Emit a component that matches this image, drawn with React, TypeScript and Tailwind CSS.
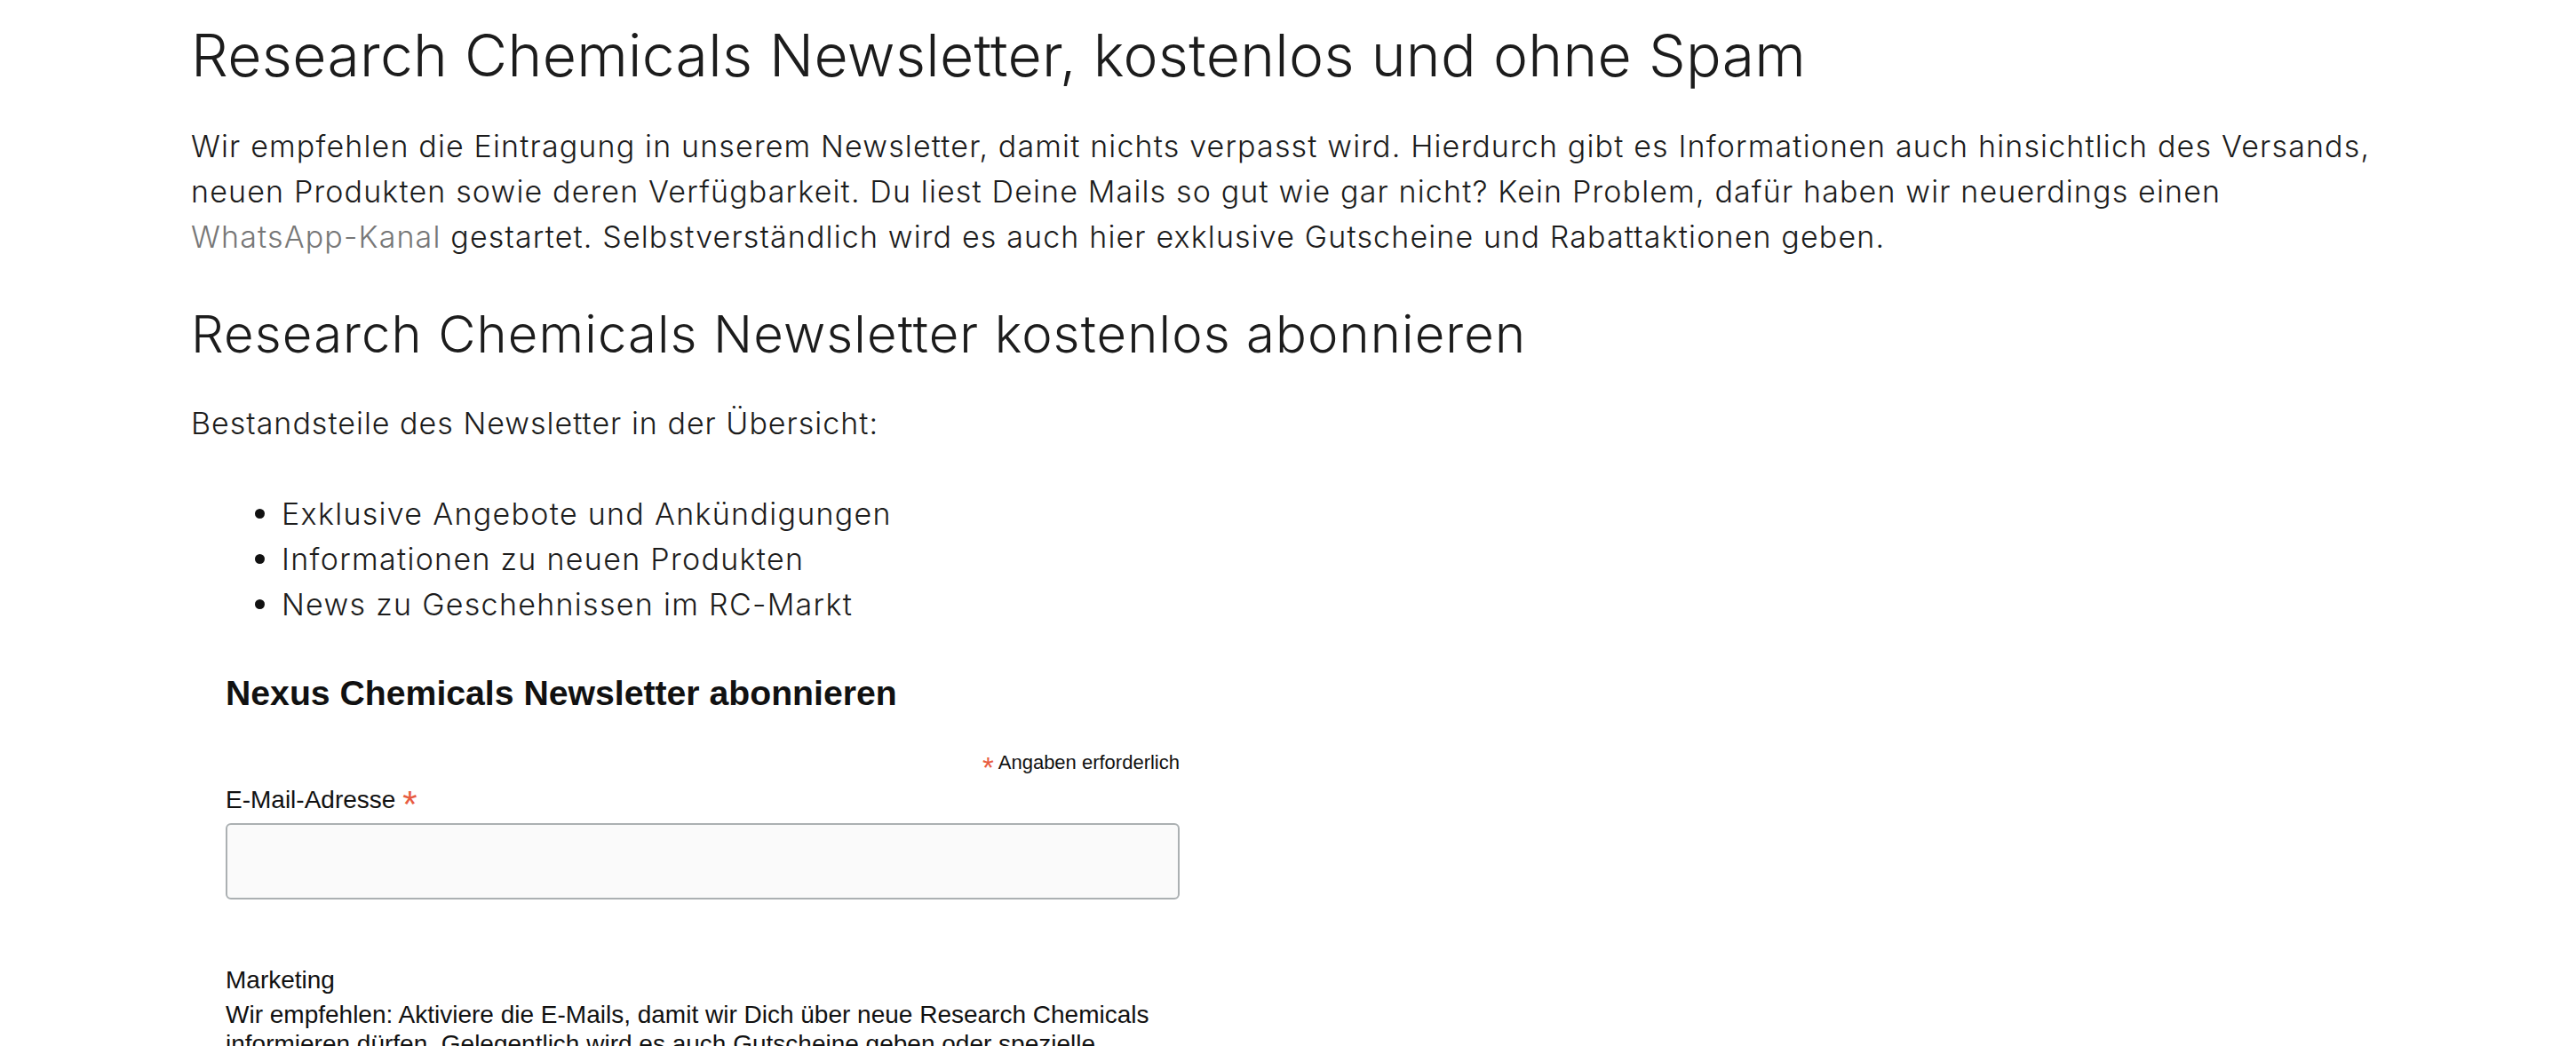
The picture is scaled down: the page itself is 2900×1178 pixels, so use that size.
import React from "react";

const bullets = [
  "Exklusive Angebote und Ankündigungen",
  "Informationen zu neuen Produkten",
  "News zu Geschehnissen im RC-Markt",
];

// Mailchimp-Formular
const SignupForm = () => {
  return (
    <form
      onSubmit={(e) => e.preventDefault()}
      className="ml-[39px] mt-[52px] w-[1074px] font-['Liberation_Sans',Helvetica,Arial,sans-serif] font-normal text-[#111]"
    >
      <h2 className="text-[39.2px] font-bold leading-[45px]">
        Nexus Chemicals Newsletter abonnieren
      </h2>
      <div className="mt-[43px] text-right text-[22px] leading-[26px]">
        <span className="relative top-[10px] text-[33px] leading-[0] text-[#e85c41]">
          *
        </span>{" "}
        Angaben erforderlich
      </div>
      <label
        htmlFor="mce-EMAIL"
        className="mt-[13px] block text-[28px] leading-[32px]"
      >
        E-Mail-Adresse{" "}
        <span className="relative top-[10px] text-[42px] leading-[0] text-[#e85c41]">
          *
        </span>
      </label>
      <input
        id="mce-EMAIL"
        type="email"
        className="mt-[10px] block h-[86px] w-full rounded-[6px] border-2 border-[#abb0b2] bg-[#fafafa] px-4 text-[28px] outline-none"
      />
      <div className="mt-[75px] text-[28px] leading-[32px]">Marketing</div>
      <p className="mt-[6px] text-[28px] leading-[33px]">
        Wir empfehlen: Aktiviere die E-Mails, damit wir Dich über neue Research
        Chemicals informieren dürfen. Gelegentlich wird es auch Gutscheine geben
        oder spezielle Angebote nur für Abonnenten.
      </p>
    </form>
  );
};

const App: React.FC = () => {
  return (
    <div className="min-h-screen bg-white">
      <main className="ml-[215px] w-[2560px] pt-[23px] font-['Inter','Open_Sans',sans-serif] font-light text-[#1c1c1c]">
        <h1 className="text-[66px] leading-[79px] tracking-[0.3px]">
          Research Chemicals Newsletter, kostenlos und ohne Spam
        </h1>
        <p className="mt-[37px] text-[34px] leading-[51px] tracking-[1.15px]">
          Wir empfehlen die Eintragung in unserem Newsletter, damit nichts
          verpasst wird. Hierdurch gibt es Informationen auch hinsichtlich des
          Versands,
          <br />
          neuen Produkten sowie deren Verfügbarkeit. Du liest Deine Mails so gut
          wie gar nicht? Kein Problem, dafür haben wir neuerdings einen
          <br />
          <a href="#" className="text-[#777]">
            WhatsApp-Kanal
          </a>{" "}
          gestartet. Selbstverständlich wird es auch hier exklusive Gutscheine
          und Rabattaktionen geben.
        </p>
        <h2 className="mt-[50px] text-[58px] leading-[69px] tracking-[1.1px]">
          Research Chemicals Newsletter kostenlos abonnieren
        </h2>
        <p className="mt-[40px] text-[34px] leading-[51px] tracking-[1px]">
          Bestandsteile des Newsletter in der Übersicht:
        </p>
        <ul className="mt-[51px] text-[34px] tracking-[1.3px]">
          {bullets.map((item) => (
            <li key={item} className="flex h-[51px] items-center">
              <span className="ml-[72px] mr-[19px] h-[11px] w-[11px] rounded-full bg-[#111]" />
              <span className="leading-[51px]">{item}</span>
            </li>
          ))}
        </ul>
        <SignupForm />
      </main>
    </div>
  );
};

export default App;
